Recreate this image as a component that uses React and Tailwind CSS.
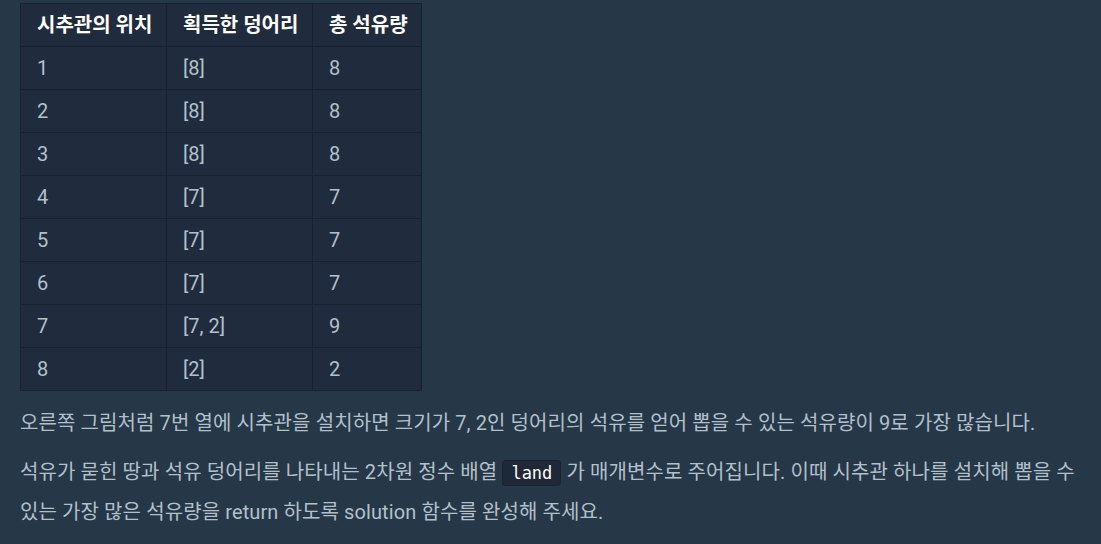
export default function App() {
  const rows = [
    ["1", "[8]", "8"],
    ["2", "[8]", "8"],
    ["3", "[8]", "8"],
    ["4", "[7]", "7"],
    ["5", "[7]", "7"],
    ["6", "[7]", "7"],
    ["7", "[7, 2]", "9"],
    ["8", "[2]", "2"],
  ];
  return (
    <div
      className="w-[1101px] h-[544px] overflow-hidden bg-[#263747] text-[#b2c0cc] px-5 pt-[3px]"
      style={{ fontFamily: '"Roboto", "Noto Sans CJK KR", sans-serif' }}
    >
      <table className="border-collapse bg-[#202b3d] text-[20px]">
        <thead>
          <tr className="h-[43px]">
            <th className="w-[146px] border border-[#172130] text-left font-semibold text-white pl-4">시추관의 위치</th>
            <th className="w-[146px] border border-[#172130] text-left font-semibold text-white pl-4">획득한 덩어리</th>
            <th className="w-[109px] border border-[#172130] text-left font-semibold text-white pl-4">총 석유량</th>
          </tr>
        </thead>
        <tbody>
          {rows.map((r, i) => (
            <tr key={i} className="h-[43px]">
              <td className="border border-[#172130] pl-4">{r[0]}</td>
              <td className="border border-[#172130] pl-4">{r[1]}</td>
              <td className="border border-[#172130] pl-4">{r[2]}</td>
            </tr>
          ))}
        </tbody>
      </table>
      <p className="mt-[13px] text-[20px] leading-[39px] tracking-[0.1px]">
        오른쪽 그림처럼 7번 열에 시추관을 설치하면 크기가 7, 2인 덩어리의 석유를 얻어 뽑을 수 있는 석유량이 9로 가장 많습니다.
      </p>
      <p className="mt-[10px] text-[20px] leading-[39px] tracking-[0.1px]">
        석유가 묻힌 땅과 석유 덩어리를 나타내는 2차원 정수 배열{" "}
        <code
          className="rounded-[4px] bg-[#1e2836] border border-[#1a2330] px-[8px] py-[2px] text-[17px] text-white tracking-normal"
          style={{ fontFamily: '"DejaVu Sans Mono", monospace' }}
        >
          land
        </code>{" "}
        가 매개변수로 주어집니다. 이때 시추관 하나를 설치해 뽑을 수 있는 가장 많은 석유량을 return 하도록 solution 함수를 완성해 주세요.
      </p>
    </div>
  );
}
